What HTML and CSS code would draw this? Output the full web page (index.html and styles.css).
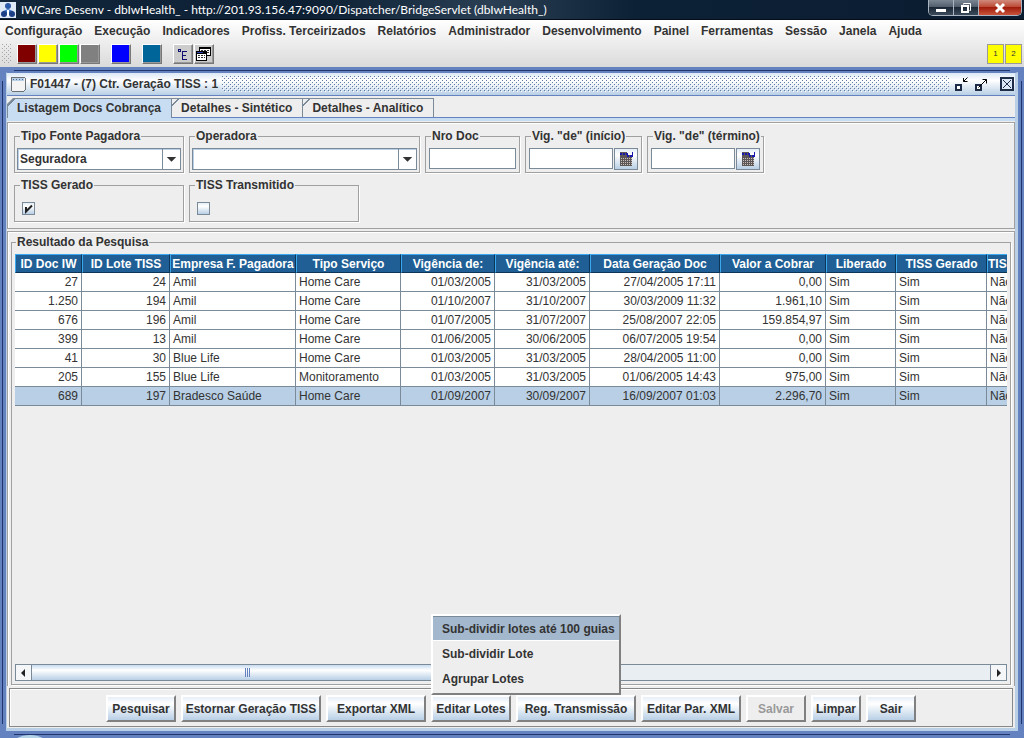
FILE: index.html
```html
<!DOCTYPE html>
<html lang="pt-BR">
<head>
    <meta charset="UTF-8">
    <meta name="viewport" content="width=device-width, initial-scale=1.0">
    <title>IWCare Desenv - dbIwHealth_</title>
    <link rel="stylesheet" href="styles.css">
</head>
<body>
    <!-- Window title -->
    <header class="titlebar">
        <svg class="app-icon" width="16" height="16" viewBox="0 0 16 16">
            <rect width="16" height="16" fill="#dfeaf8"/>
            <circle cx="8" cy="4" r="3" fill="#2c5aa8"/>
            <path d="M3 9l5-2 5 2v3H3z" fill="#3f78c8"/>
            <circle cx="4" cy="12" r="3" fill="#1c3f86"/>
            <circle cx="12" cy="12" r="3" fill="#1c3f86"/>
            <path d="M7 8h2v6H7z" fill="#fff"/>
        </svg>
        <span class="title-text">IWCare Desenv - dbIwHealth_ - http://201.93.156.47:9090/Dispatcher/BridgeServlet (dbIwHealth_)</span>
        <div class="window-controls">
            <button class="win-btn" aria-label="Minimizar">
                <svg width="12" height="12" viewBox="0 0 12 12"><rect x="1" y="7" width="10" height="3" fill="#fff"/></svg>
            </button>
            <button class="win-btn" aria-label="Restaurar">
                <svg width="12" height="12" viewBox="0 0 12 12" fill="none" stroke="#fff"><path d="M3.500 2.500v-1h7v7h-1"/><rect x="2" y="4" width="6" height="6" stroke-width="2"/></svg>
            </button>
            <button class="win-btn win-close" aria-label="Fechar">
                <svg width="12" height="12" viewBox="0 0 12 12" stroke="#fff" stroke-width="3"><path d="M2 2l8 8M10 2l-8 8"/></svg>
            </button>
        </div>
    </header>

    <div class="top-area">
        <nav class="menubar">
            <a href="#">Configuração</a>
            <a href="#">Execução</a>
            <a href="#">Indicadores</a>
            <a href="#">Profiss. Terceirizados</a>
            <a href="#">Relatórios</a>
            <a href="#">Administrador</a>
            <a href="#">Desenvolvimento</a>
            <a href="#">Painel</a>
            <a href="#">Ferramentas</a>
            <a href="#">Sessão</a>
            <a href="#">Janela</a>
            <a href="#">Ajuda</a>
        </nav>
        <div class="toolbar">
            <svg class="grip" width="10" height="20">
                <defs>
                    <pattern id="grip-dots" width="4" height="4" patternUnits="userSpaceOnUse">
                        <rect width="1" height="1" fill="#a0a4aa"/>
                        <rect x="2" y="2" width="1" height="1" fill="#a0a4aa"/>
                    </pattern>
                </defs>
                <rect width="10" height="20" fill="url(#grip-dots)"/>
            </svg>
            <div class="tool-group">
                <button class="tool maroon" aria-label="Vinho"></button>
                <button class="tool yellow" aria-label="Amarelo"></button>
                <button class="tool green" aria-label="Verde"></button>
                <button class="tool gray" aria-label="Cinza"></button>
            </div>
            <button class="tool blue" aria-label="Azul"></button>
            <button class="tool teal" aria-label="Petróleo"></button>
            <div class="tool-group">
                <button class="tool silver" aria-label="Árvore">
                    <svg width="16" height="16" viewBox="0 0 16 16" fill="none" stroke="#101070" shape-rendering="crispEdges">
                        <path d="M4.500 3.500h2v2h-2zM8.500 5v9M8 5.500h5M8 9.500h4M8 13.500h5"/>
                    </svg>
                </button>
                <button class="tool silver" aria-label="Janelas">
                    <svg width="16" height="16" viewBox="0 0 16 16" shape-rendering="crispEdges">
                        <rect x="4" y="1" width="12" height="9" fill="#000"/>
                        <rect x="5" y="3" width="10" height="6" fill="#fff"/>
                        <path d="M6 4.500h8M6 6.500h8" stroke="#333" stroke-dasharray="2 1"/>
                        <rect x="1" y="5" width="11" height="10" fill="#000"/>
                        <rect x="2" y="8" width="9" height="6" fill="#fff"/>
                        <path d="M3 9.500h7M3 11.500h7" stroke="#333" stroke-dasharray="2 1"/>
                        <path d="M2 6.500h6" stroke="#2a3fb0"/>
                    </svg>
                </button>
            </div>
            <div class="page-buttons">
                <button class="page-btn">1</button>
                <button class="page-btn">2</button>
            </div>
        </div>
    </div>

    <main class="frame">
        <div class="frame-inner">
            <div class="frame-title">
                <svg width="16" height="16" viewBox="0 0 16 16" shape-rendering="crispEdges">
                    <rect x="1" y="1" width="14" height="14" rx="1" fill="#f4f4f4" stroke="#6b6f76"/>
                    <rect x="2" y="2" width="12" height="3" fill="#b8cfe5"/>
                    <path d="M3 3.500h11" stroke="#4a6a98" stroke-dasharray="1 2"/>
                </svg>
                <h1>F01447 - (7) Ctr. Geração TISS : 1</h1>
                <svg class="bumps" height="16">
                    <defs>
                        <pattern id="title-dots" width="4" height="4" patternUnits="userSpaceOnUse">
                            <rect width="1" height="1" fill="#5f7ba8"/>
                            <rect x="2" y="2" width="1" height="1" fill="#5f7ba8"/>
                            <rect x="1" y="1" width="1" height="1" fill="#fff"/>
                            <rect x="3" y="3" width="1" height="1" fill="#fff"/>
                        </pattern>
                    </defs>
                    <rect width="100%" height="16" fill="url(#title-dots)"/>
                </svg>
                <div class="frame-buttons">
                    <button aria-label="Minimizar">
                        <svg width="16" height="16" viewBox="0 0 16 16" fill="none" stroke="#1e2c48">
                            <rect x="3" y="9" width="5" height="5" stroke-width="2" fill="#fff"/>
                            <path d="M14.500 1.500l-4 4M10.500 2v3.500h4" stroke="#000"/>
                        </svg>
                    </button>
                    <button aria-label="Maximizar">
                        <svg width="16" height="16" viewBox="0 0 16 16" fill="none" stroke="#1e2c48">
                            <rect x="3" y="9" width="5" height="5" stroke-width="2" fill="#fff"/>
                            <path d="M5.500 11.500l8-8M9.500 3.500h4v4" stroke="#000"/>
                        </svg>
                    </button>
                    <button class="frame-close" aria-label="Fechar">
                        <svg width="16" height="16" viewBox="0 0 16 16" fill="none" stroke="#1e2c48">
                            <rect x="2" y="2" width="12" height="12" stroke-width="2" fill="#dbe7f5"/>
                            <path d="M4 4l8 8M12 4l-8 8"/>
                        </svg>
                    </button>
                </div>
            </div>

            <div class="tabs" role="tablist">
                <button class="tab active" role="tab" aria-selected="true">Listagem Docs Cobrança</button>
                <button class="tab" role="tab">Detalhes - Sintético</button>
                <button class="tab" role="tab">Detalhes - Analítico</button>
            </div>

            <div class="tab-page">
                <section class="filters">
                    <div class="filter-row">
                        <fieldset class="group w-type">
                            <legend><label for="tipo">Tipo Fonte Pagadora</label></legend>
                            <div class="combo">
                                <select id="tipo"><option>Seguradora</option></select>
                                <svg class="arrow" width="18" height="20" viewBox="0 0 18 20"><path d="M4 8h10l-5 5z" fill="#333"/></svg>
                            </div>
                        </fieldset>
                        <fieldset class="group w-operator">
                            <legend><label for="operadora">Operadora</label></legend>
                            <div class="combo">
                                <select id="operadora"><option></option></select>
                                <svg class="arrow" width="18" height="20" viewBox="0 0 18 20"><path d="M4 8h10l-5 5z" fill="#333"/></svg>
                            </div>
                        </fieldset>
                        <fieldset class="group w-doc">
                            <legend><label for="nrodoc">Nro Doc</label></legend>
                            <div class="field"><input type="text" id="nrodoc"></div>
                        </fieldset>
                        <fieldset class="group w-date">
                            <legend><label for="inicio">Vig. "de" (início)</label></legend>
                            <div class="field">
                                <input type="text" id="inicio">
                                <button class="date-btn" aria-label="Calendário">
                                    <svg width="14" height="14" viewBox="0 0 14 14" shape-rendering="crispEdges">
                                        <path d="M1 0h7v3h5v11H1z" fill="#5c5656"/>
                                        <path d="M1 2h7v2h5" stroke="#1818b0" stroke-width="2" fill="none" stroke-dasharray="2 1"/>
                                        <path d="M2 6.500h11M2 8.500h11M2 10.500h11M2 12.500h11" stroke="#c8c0bc" stroke-dasharray="1 1"/>
                                        <path d="M13 0v5" stroke="#1818b0"/>
                                    </svg>
                                </button>
                            </div>
                        </fieldset>
                        <fieldset class="group w-date">
                            <legend><label for="termino">Vig. "de" (término)</label></legend>
                            <div class="field">
                                <input type="text" id="termino">
                                <button class="date-btn" aria-label="Calendário">
                                    <svg width="14" height="14" viewBox="0 0 14 14" shape-rendering="crispEdges">
                                        <path d="M1 0h7v3h5v11H1z" fill="#5c5656"/>
                                        <path d="M1 2h7v2h5" stroke="#1818b0" stroke-width="2" fill="none" stroke-dasharray="2 1"/>
                                        <path d="M2 6.500h11M2 8.500h11M2 10.500h11M2 12.500h11" stroke="#c8c0bc" stroke-dasharray="1 1"/>
                                        <path d="M13 0v5" stroke="#1818b0"/>
                                    </svg>
                                </button>
                            </div>
                        </fieldset>
                    </div>
                    <div class="filter-row">
                        <fieldset class="group w-type">
                            <legend><label for="gerado">TISS Gerado</label></legend>
                            <div class="check">
                                <input type="checkbox" id="gerado" checked>
                                <svg class="tick" width="13" height="13" viewBox="0 0 13 13"><path d="M4 5v4.500L10 3.500" fill="none" stroke="#222" stroke-width="2"/></svg>
                            </div>
                        </fieldset>
                        <fieldset class="group w-type">
                            <legend><label for="transmitido">TISS Transmitido</label></legend>
                            <div class="check"><input type="checkbox" id="transmitido"></div>
                        </fieldset>
                    </div>
                </section>

                <section class="results">
                    <fieldset class="group result-group">
                        <legend>Resultado da Pesquisa</legend>
                        <div class="result-body">
                            <div class="table-view">
                                <table class="grid">
                                    <colgroup>
                                        <col class="c-doc"><col class="c-lote"><col class="c-empresa"><col class="c-servico">
                                        <col class="c-de"><col class="c-ate"><col class="c-geracao"><col class="c-valor">
                                        <col class="c-liberado"><col class="c-gerado"><col class="c-transm">
                                    </colgroup>
                                    <thead>
                                        <tr><th>ID Doc IW</th><th>ID Lote TISS</th><th>Empresa F. Pagadora</th><th>Tipo Serviço</th><th>Vigência de:</th><th>Vigência até:</th><th>Data Geração Doc</th><th>Valor a Cobrar</th><th>Liberado</th><th>TISS Gerado</th><th class="first">TISS Transmitido</th></tr>
                                    </thead>
                                    <tbody>
                                        <tr><td class="num">27</td><td class="num">24</td><td>Amil</td><td>Home Care</td><td class="num">01/03/2005</td><td class="num">31/03/2005</td><td class="num">27/04/2005 17:11</td><td class="num">0,00</td><td>Sim</td><td>Sim</td><td>Não</td></tr>
                                        <tr><td class="num">1.250</td><td class="num">194</td><td>Amil</td><td>Home Care</td><td class="num">01/10/2007</td><td class="num">31/10/2007</td><td class="num">30/03/2009 11:32</td><td class="num">1.961,10</td><td>Sim</td><td>Sim</td><td>Não</td></tr>
                                        <tr><td class="num">676</td><td class="num">196</td><td>Amil</td><td>Home Care</td><td class="num">01/07/2005</td><td class="num">31/07/2007</td><td class="num">25/08/2007 22:05</td><td class="num">159.854,97</td><td>Sim</td><td>Sim</td><td>Não</td></tr>
                                        <tr><td class="num">399</td><td class="num">13</td><td>Amil</td><td>Home Care</td><td class="num">01/06/2005</td><td class="num">30/06/2005</td><td class="num">06/07/2005 19:54</td><td class="num">0,00</td><td>Sim</td><td>Sim</td><td>Não</td></tr>
                                        <tr><td class="num">41</td><td class="num">30</td><td>Blue Life</td><td>Home Care</td><td class="num">01/03/2005</td><td class="num">31/03/2005</td><td class="num">28/04/2005 11:00</td><td class="num">0,00</td><td>Sim</td><td>Sim</td><td>Não</td></tr>
                                        <tr><td class="num">205</td><td class="num">155</td><td>Blue Life</td><td>Monitoramento</td><td class="num">01/03/2005</td><td class="num">31/03/2005</td><td class="num">01/06/2005 14:43</td><td class="num">975,00</td><td>Sim</td><td>Sim</td><td>Não</td></tr>
                                        <tr class="selected"><td class="num">689</td><td class="num">197</td><td>Bradesco Saúde</td><td>Home Care</td><td class="num">01/09/2007</td><td class="num">30/09/2007</td><td class="num">16/09/2007 01:03</td><td class="num">2.296,70</td><td>Sim</td><td>Sim</td><td>Não</td></tr>
                                    </tbody>
                                </table>
                            </div>
                            <div class="scrollbar">
                                <button aria-label="Rolar para a esquerda"><svg width="14" height="14" viewBox="0 0 14 14"><path d="M9 3v8L5 7z" fill="#222"/></svg></button>
                                <div class="track">
                                    <div class="thumb"><i></i><i></i><i></i></div>
                                </div>
                                <button aria-label="Rolar para a direita"><svg width="14" height="14" viewBox="0 0 14 14"><path d="M6 3v8l4-4z" fill="#222"/></svg></button>
                            </div>
                        </div>
                    </fieldset>
                </section>

                <footer class="actions">
                    <button class="btn b70">Pesquisar</button>
                    <button class="btn b140">Estornar Geração TISS</button>
                    <button class="btn b100">Exportar XML</button>
                    <div class="menu-anchor">
                        <button class="btn b80">Editar Lotes</button>
                        <div class="popup" role="menu">
                            <button class="highlighted" role="menuitem">Sub-dividir lotes até 100 guias</button>
                            <button role="menuitem">Sub-dividir Lote</button>
                            <button role="menuitem">Agrupar Lotes</button>
                        </div>
                    </div>
                    <button class="btn b120">Reg. Transmissão</button>
                    <button class="btn b100">Editar Par. XML</button>
                    <button class="btn b60" disabled>Salvar</button>
                    <button class="btn b50">Limpar</button>
                    <button class="btn b50">Sair</button>
                </footer>
            </div>
        </div>
        <!-- Top of the minimized window behind -->
        <svg class="orb" width="26" height="3" viewBox="0 0 26 3"><ellipse cx="13" cy="10" rx="18" ry="10" fill="#b5d3e6"/></svg>
    </main>
</body>
</html>
```

FILE: styles.css
```css
* {
    box-sizing: border-box;
}
body {
    margin: 0;
    height: 100vh;
    display: flex;
    flex-direction: column;
    overflow: hidden;
    background: #6382bf;
    color: #333;
    font: bold 12px/14px "Liberation Sans", Arial, sans-serif;
}
button, input, select {
    font: inherit;
    color: inherit;
    margin: 0;
    padding: 0;
    border-radius: 0;
}
svg {
    display: block;
    flex: none;
}

/* Window title */
.titlebar {
    display: flex;
    align-items: center;
    gap: 5px;
    height: 20px;
    background: linear-gradient(90deg, #12263c, #0c1f33 30%, #2a3f54 48%, #0d2136 62%, #0a1c30);
    border-bottom: 1px solid #050c18;
    color: #fff;
}
.title-text {
    flex: 1;
    font: 12px/18px Lato, "Open Sans", sans-serif;
    white-space: nowrap;
}
.window-controls {
    display: flex;
    align-self: flex-start;
    margin-right: 2px;
    border: 1px solid #aab4c0;
    border-top: none;
    border-radius: 0 0 5px 5px;
    overflow: hidden;
}
.win-btn {
    display: flex;
    align-items: center;
    justify-content: center;
    width: 25px;
    height: 15px;
    border: none;
    border-right: 1px solid #aab4c0;
    background: linear-gradient(#7b8693, #525e6c 45%, #1b2836 50%, #3c4b5c);
}
.win-close {
    width: 42px;
    border-right: none;
    background: linear-gradient(#d08a7c, #bd4a36 45%, #a01c0c 50%, #c8543a);
}

/* Menu bar and toolbar */
.top-area {
    height: 47px;
    background: linear-gradient(#fff, #dadada);
}
.menubar {
    display: flex;
    gap: 12px;
    padding: 4px 5px;
}
.menubar a {
    color: #333;
    text-decoration: none;
    white-space: nowrap;
}
.toolbar {
    display: flex;
    align-items: center;
    gap: 11px;
    padding: 2px 2px 0 2px;
}
.grip {
    margin-right: -6px;
}
.tool-group {
    display: flex;
    gap: 1px;
}
.tool {
    width: 20px;
    height: 20px;
    border: 1px solid;
    border-color: #fff #777 #777 #fff;
    box-shadow: inset -1px -1px 0 #999;
}
.maroon { background: #800000; }
.yellow { background: #ff0; }
.green { background: #0f0; }
.gray { background: #808080; }
.blue { background: #00f; }
.teal { background: #006699; }
.silver { background: #ccc; }
.page-buttons {
    display: flex;
    gap: 1px;
    margin-left: auto;
}
.page-btn {
    width: 17px;
    height: 20px;
    border: 1px solid #9a9a9a;
    background: #ff0;
    font-size: 8px;
    font-weight: normal;
}

/* Internal frame, dark lines run between the corners */
.frame {
    flex: 1;
    display: flex;
    position: relative;
    min-height: 0;
    padding: 5px 6px 7px 6px;
    background:
        linear-gradient(#20356b, #20356b) 14px 3px / calc(100% - 28px) 1px no-repeat,
        linear-gradient(#20356b, #20356b) 14px calc(100% - 3px) / calc(100% - 28px) 1px no-repeat,
        linear-gradient(#20356b, #20356b) 2px 14px / 1px calc(100% - 28px) no-repeat,
        linear-gradient(#20356b, #20356b) calc(100% - 2px) 14px / 1px calc(100% - 28px) no-repeat,
        #6382bf;
}
.frame-inner {
    flex: 1;
    display: flex;
    flex-direction: column;
    min-width: 0;
    background: #eee;
    border: 1px solid #b8cfe5;
    border-top-color: #6382bf;
    border-right-width: 3px;
    border-bottom-width: 3px;
}
.orb {
    position: absolute;
    left: 17px;
    bottom: 0;
}
.frame-title {
    display: flex;
    align-items: center;
    gap: 4px;
    height: 23px;
    padding: 0 0 0 3px;
    border-bottom: 1px solid #6382bf;
    background: linear-gradient(#dce8f6, #fff 35%, #b8cfe5);
}
.frame-title h1 {
    margin: 0;
    font-size: 12px;
    white-space: nowrap;
}
.bumps {
    flex: 1;
    min-width: 0;
}
.frame-buttons {
    display: flex;
    gap: 4px;
}
.frame-buttons button {
    border: none;
    background: none;
}
.frame-close {
    margin-left: 6px;
}

/* Tabs */
.tabs {
    display: flex;
    padding-top: 2px;
    border-bottom: 1px solid #6382bf;
}
.tab {
    height: 19px;
    padding: 0 10px 0 9px;
    border: 1px solid #7a8a99;
    border-bottom: none;
    border-left: none;
    background: linear-gradient(135deg, #eee 4px, #7a8a99 4px, #7a8a99 5px, #eee 5px);
    white-space: nowrap;
}
.tab.active {
    height: 20px;
    margin-bottom: -1px;
    padding-bottom: 2px;
    border-left: 1px solid #7a8a99;
    background: linear-gradient(135deg, #7a8a99 5px, #c8ddf2 5px);
    clip-path: polygon(6px 0, 100% 0, 100% 100%, 0 100%, 0 6px);
}
.tab-page {
    flex: 1;
    display: flex;
    flex-direction: column;
    gap: 2px;
    min-height: 0;
    padding: 1px 0;
    border-top: 3px solid #c8ddf2;
}

/* Filters */
.filters, .results {
    border: 1px solid #a0a0a0;
    box-shadow: inset 1px 1px 0 #fff;
}
.filters {
    display: flex;
    flex-direction: column;
    gap: 5px;
    padding: 6px;
}
.filter-row {
    display: flex;
    gap: 5px;
}
.group {
    min-width: 0;
    margin: 0;
    padding: 5px 2px 2px 2px;
    border: 1px solid #a0a0a0;
    box-shadow: 1px 1px 0 #fff;
}
.group legend {
    margin-left: 3px;
    padding: 0 1px;
    white-space: nowrap;
}
.w-type { width: 170px; }
.w-operator { width: 231px; }
.w-doc { width: 95px; }
.w-date { width: 117px; }
.combo {
    position: relative;
}
.combo select {
    display: block;
    width: 100%;
    height: 22px;
    padding: 0 20px 0 2px;
    appearance: none;
    border: 1px solid #7a8a99;
    background: #fff;
    box-shadow: inset 1px 1px 0 #b8cfe5;
}
.arrow {
    position: absolute;
    top: 1px;
    right: 1px;
    border-left: 1px solid #7a8a99;
    pointer-events: none;
}
.field {
    display: flex;
    gap: 1px;
    height: 22px;
    padding: 0 1px;
}
.field input {
    flex: 1;
    min-width: 0;
    height: 21px;
    border: 1px solid #7a8a99;
    background: #fff;
}
.date-btn {
    display: flex;
    align-items: center;
    justify-content: center;
    width: 24px;
    border: 1px solid #7a8a99;
    background: linear-gradient(#e4edf7, #fff 30%, #b8cfe5);
}
.check {
    position: relative;
    height: 22px;
    padding: 5px;
}
.check input {
    display: block;
    width: 13px;
    height: 13px;
    appearance: none;
    border: 1px solid #7a8a99;
    background: linear-gradient(#e4edf7, #fff 30%, #b8cfe5);
}
.tick {
    position: absolute;
    top: 5px;
    left: 5px;
    pointer-events: none;
}

/* Results */
.results {
    flex: 1;
    display: flex;
    min-height: 0;
    padding: 3px 3px 1px 3px;
    border-bottom: none;
}
.result-group {
    flex: 1;
    padding: 5px 3px 3px 3px;
}
.result-group legend {
    margin-left: 1px;
}
.result-body {
    display: flex;
    flex-direction: column;
    height: 100%;
}
.table-view {
    flex: 1;
    min-height: 0;
    overflow: hidden;
}
.grid {
    width: 1071px;
    table-layout: fixed;
    border-spacing: 0;
}
.c-doc { width: 67px; }
.c-lote { width: 88px; }
.c-empresa { width: 126px; }
.c-servico { width: 105px; }
.c-de { width: 94px; }
.c-ate { width: 95px; }
.c-geracao { width: 130px; }
.c-valor { width: 106px; }
.c-liberado { width: 70px; }
.c-gerado { width: 91px; }
.c-transm { width: 99px; }
.grid th {
    height: 19px;
    padding: 0;
    border: 1px solid;
    border-color: #3aa8ee #0c3558 #0c3558 #3aa8ee;
    background: #1f5f95;
    color: #fff;
    white-space: nowrap;
    overflow: hidden;
}
.grid th.first {
    text-align: left;
}
.grid td {
    height: 19px;
    padding: 0 3px;
    border-right: 1px solid #7a8a99;
    border-bottom: 1px solid #7a8a99;
    background: #fff;
    font-weight: normal;
    white-space: nowrap;
}
.grid .num {
    text-align: right;
}
.grid .selected td {
    background: #b8cfe5;
}
.scrollbar {
    display: flex;
    height: 17px;
    border: 1px solid #7a8a99;
}
.scrollbar button {
    width: 15px;
    border: none;
    background: #f4f6f8;
}
.track {
    flex: 1;
    border-left: 1px solid #7a8a99;
    border-right: 1px solid #7a8a99;
    background: #e9eef3;
}
.thumb {
    display: flex;
    align-items: center;
    justify-content: center;
    gap: 1px;
    width: 45%;
    height: 15px;
    border-right: 1px solid #6382bf;
    background: linear-gradient(#c8dcf0, #fff 35%, #b8cfe5);
}
.thumb i {
    width: 1px;
    height: 9px;
    background: #6382bf;
}

/* Action buttons */
.actions {
    display: flex;
    justify-content: center;
    gap: 5px;
    margin: 0 2px;
    padding: 6px 6px 4px 6px;
    border: 1px solid #888;
    box-shadow: inset 1px 1px 0 #fff;
}
.btn {
    height: 27px;
    border: 2px solid;
    border-color: #fff #808080 #808080 #fff;
    background: linear-gradient(#e8eff8, #fff 30%, #b8cfe5);
    white-space: nowrap;
}
.btn:disabled {
    background: #eee;
    color: #999;
}
.b50 { width: 50px; }
.b60 { width: 60px; }
.b70 { width: 70px; }
.b80 { width: 80px; }
.b100 { width: 100px; }
.b120 { width: 120px; }
.b140 { width: 140px; }
.menu-anchor {
    position: relative;
}
.popup {
    position: absolute;
    left: 0;
    bottom: 100%;
    display: flex;
    flex-direction: column;
    width: 190px;
    padding-bottom: 2px;
    border: 2px solid;
    border-color: #fff #808080 #808080 #fff;
    background: #eee;
}
.popup button {
    height: 25px;
    padding-left: 9px;
    border: none;
    background: none;
    text-align: left;
    white-space: nowrap;
}
.popup .highlighted {
    background: #a3b8cc;
    border-top: 1px solid #7a8a99;
    border-bottom: 1px solid #fff;
}
```
